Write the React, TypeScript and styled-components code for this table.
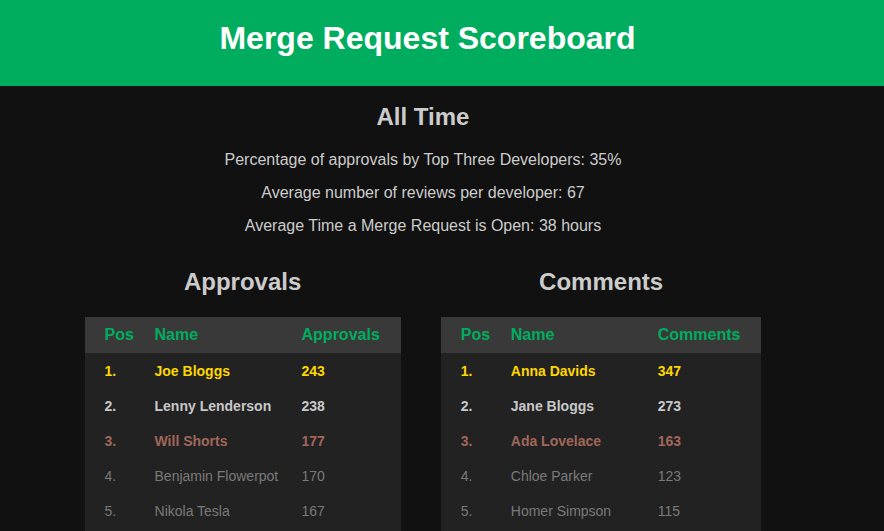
import React from "react";
import styled, { createGlobalStyle } from "styled-components";

const GlobalStyle = createGlobalStyle`
  html, body { margin: 0; padding: 0; background: #111111; }
  body { font-family: "Liberation Sans", Arial, sans-serif; color: #cccccc; }
  *, *::before, *::after { box-sizing: border-box; }
`;

const Header = styled.header`
  background: #00ad5f;
  height: 86px;
  display: flex;
  align-items: center;
  justify-content: center;
  padding: 0 29px 10px 0;
`;

const Title = styled.h1`
  margin: 0;
  color: #ffffff;
  font-size: 32px;
  font-weight: bold;
`;

const Main = styled.main`
  width: 846px;
  display: flex;
  flex-direction: column;
  align-items: center;
`;

const Period = styled.h2`
  margin: 17px 0 12px;
  font-size: 24px;
  font-weight: bold;
  color: #cccccc;
`;

const Stat = styled.p`
  margin: 0;
  line-height: 33px;
  font-size: 16px;
  color: #cccccc;
`;

const Boards = styled.div`
  display: flex;
  gap: 40px;
  margin-top: 26px;
  align-items: flex-start;
`;

const Board = styled.section`
  display: flex;
  flex-direction: column;
  align-items: center;
`;

const BoardTitle = styled.h3`
  margin: 0 0 21px;
  font-size: 24px;
  font-weight: bold;
  line-height: 28px;
  color: #cccccc;
`;

const Table = styled.table`
  border-collapse: collapse;
  background: #222222;
  font-size: 14px;
`;

const HeadRow = styled.tr`
  background: #393939;
  height: 36px;
`;

const Th = styled.th<{ $w?: number; $last?: boolean }>`
  text-align: left;
  color: #00ad5f;
  font-size: 16px;
  font-weight: bold;
  padding: 0 ${(p) => (p.$last ? "21px" : "0")} 0 20px;
  width: ${(p) => (p.$w ? `${p.$w}px` : "auto")};
  white-space: nowrap;
`;

const rankColors: Record<number, string> = {
  1: "#ffd700",
  2: "#c8c8c8",
  3: "#a0675a",
};

const Row = styled.tr<{ $rank: number }>`
  height: 35px;
  color: ${(p) => rankColors[p.$rank] ?? "#7a7a7a"};
  font-weight: ${(p) => (p.$rank <= 3 ? "bold" : "normal")};
`;

const Td = styled.td<{ $last?: boolean }>`
  padding: 0 ${(p) => (p.$last ? "21px" : "0")} 0 20px;
  white-space: nowrap;
`;

type Entry = { name: string; value: number };

const approvals: Entry[] = [
  { name: "Joe Bloggs", value: 243 },
  { name: "Lenny Lenderson", value: 238 },
  { name: "Will Shorts", value: 177 },
  { name: "Benjamin Flowerpot", value: 170 },
  { name: "Nikola Tesla", value: 167 },
  { name: "Grace Hopper", value: 150 },
];

const comments: Entry[] = [
  { name: "Anna Davids", value: 347 },
  { name: "Jane Bloggs", value: 273 },
  { name: "Ada Lovelace", value: 163 },
  { name: "Chloe Parker", value: 123 },
  { name: "Homer Simpson", value: 115 },
  { name: "Alan Turing", value: 101 },
];

function Scoreboard({ title, label, rows }: { title: string; label: string; rows: Entry[] }) {
  return (
    <Board>
      <BoardTitle>{title}</BoardTitle>
      <Table>
        <thead>
          <HeadRow>
            <Th $w={50}>Pos</Th>
            <Th $w={147}>Name</Th>
            <Th $last>{label}</Th>
          </HeadRow>
        </thead>
        <tbody>
          {rows.map((r, i) => (
            <Row key={r.name} $rank={i + 1}>
              <Td>{i + 1}.</Td>
              <Td>{r.name}</Td>
              <Td $last>{r.value}</Td>
            </Row>
          ))}
        </tbody>
      </Table>
    </Board>
  );
}

export default function App() {
  return (
    <>
      <GlobalStyle />
      <Header>
        <Title>Merge Request Scoreboard</Title>
      </Header>
      <Main>
        <Period>All Time</Period>
        <Stat>Percentage of approvals by Top Three Developers: 35%</Stat>
        <Stat>Average number of reviews per developer: 67</Stat>
        <Stat>Average Time a Merge Request is Open: 38 hours</Stat>
        <Boards>
          <Scoreboard title="Approvals" label="Approvals" rows={approvals} />
          <Scoreboard title="Comments" label="Comments" rows={comments} />
        </Boards>
      </Main>
    </>
  );
}
